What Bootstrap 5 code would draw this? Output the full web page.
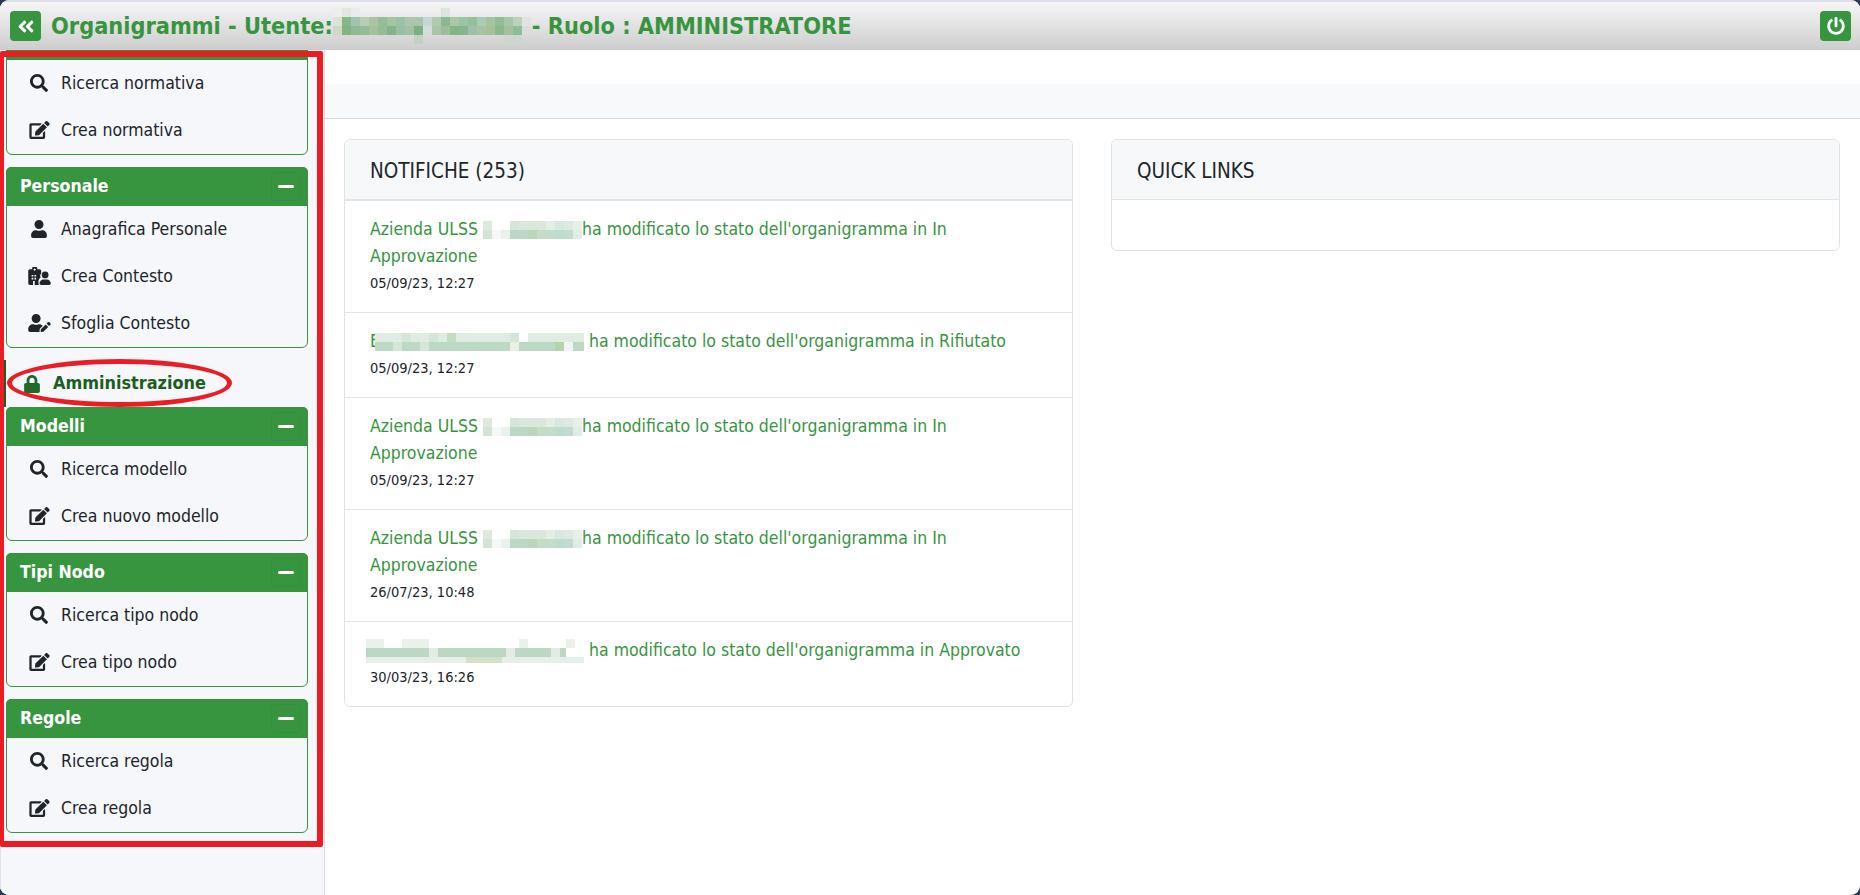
<!DOCTYPE html>
<html lang="it">
<head>
<meta charset="utf-8">
<title>Organigrammi</title>
<link href="https://cdn.jsdelivr.net/npm/bootstrap@5.3.0/dist/css/bootstrap.min.css" rel="stylesheet">
<style>
html,body{height:100%;margin:0;overflow:hidden;background:#2c3a50;}
body{font-family:"DejaVu Sans Condensed","DejaVu Sans",sans-serif;font-stretch:condensed;font-size:17.5px;color:#212529;}
svg.ico{fill:#212529;display:block;margin-top:-1px;}
.app-frame{position:relative;height:895px;border-radius:9px;overflow:hidden;background:#fff;}
.app-head{height:50px;flex:none;background:linear-gradient(#f6f6f6,#cdcdcd);border-top:2px solid #dde0e8;padding:0 9px 0 10px;color:#37953f;}
.head-btn{background:#37953f;border-radius:4px;height:30px;width:31px;border:0;padding:0;display:flex;align-items:center;justify-content:center;}
.head-btn svg{fill:#fff;display:block;}
.head-title{font-size:23.3px;font-weight:700;line-height:30px;white-space:nowrap;margin-left:10px;}
.head-title .blur{margin:0 1px 0 0;}
.side-col{width:325px;flex:none;background:#f5f7fb;border-right:1px solid #d9dce0;border-left:1px solid #dfe2e8;padding:0 16px 0 5px;overflow:hidden;}
.side-box{border:1px solid #37953f;border-radius:6px;margin-bottom:12px;background:#f5f7fb;height:134px;}
.side-box.three{height:181px;}
.side-box.clipped{margin-top:-29px;}
.side-top{background:#37953f;color:#fff;font-weight:700;font-size:17.6px;padding:0 7px 0 14px;border-radius:5px 5px 0 0;margin:-1px -1px 0;height:39px;}
.min-btn{width:30px;height:29px;border:1px solid #35903d;border-radius:5px;display:flex;align-items:center;justify-content:center;}
.min-btn i{display:block;width:16px;height:3px;background:#fff;border-radius:2px;}
.side-row{height:47px;padding-left:18px;color:#212529;text-decoration:none;white-space:nowrap;}
.ico-slot{width:28px;flex:none;display:flex;justify-content:center;margin-right:8px;}
.side-admin{height:47px;margin:0 0 0 -2px;border-left:2px solid #1b5e20;padding-left:18px;color:#1b5e20;font-weight:700;font-size:17.9px;white-space:nowrap;text-decoration:none;}
.side-admin svg{fill:#1f6a2b;display:block;margin-right:13px;}
.main-col{flex:1 1 auto;min-width:0;}
.top-gap{height:34px;background:#fff;}
.sub-bar{height:35px;background:#f8f9fb;border-bottom:1px solid #cddde3;}
.main-cards{padding:20px 20px 0 19px;}
.panel-box{border:1px solid #e0e3e6;border-radius:6px;background:#fff;width:729px;}
.panel-top{background:#f7f8fa;border-bottom:1px solid #e0e3e6;padding:17px 20px 14px 25px;line-height:28px;font-size:20.5px;border-radius:6px 6px 0 0;}
.panel-empty{height:50px;}
.note-row{padding:15px 25px;border-top:1px solid #e3e6e8;line-height:27px;}
.note-row:first-child{border-top:0;}
.note-row a{color:#37953f;text-decoration:none;}
.note-date{font-size:14.5px;color:#212529;}
.blur{display:inline-block;vertical-align:middle;}
.blur-e{margin-left:-10px;}
.blur-f{margin-left:-4px;}
.ring{position:absolute;left:7px;top:359px;width:225px;height:48px;border:5px solid #ec1c24;border-radius:50%;pointer-events:none;}
.frame-mark{position:absolute;left:0;top:51px;width:323px;height:796px;border:6px solid #ec1c24;border-left-width:4px;border-radius:2px;pointer-events:none;}
</style>
</head>
<body>
<svg width="0" height="0" class="position-absolute">
<defs>
<symbol id="i-search" viewBox="0 0 512 512"><path d="M505 442.7L405.3 343c-4.5-4.5-10.6-7-17-7H372c27.6-35.3 44-79.7 44-128C416 93.1 322.9 0 208 0S0 93.1 0 208s93.1 208 208 208c48.3 0 92.7-16.4 128-44v16.3c0 6.4 2.5 12.5 7 17l99.7 99.7c9.4 9.4 24.6 9.4 33.9 0l28.3-28.3c9.4-9.4 9.4-24.6.1-34zM208 336c-70.7 0-128-57.2-128-128 0-70.7 57.2-128 128-128 70.7 0 128 57.2 128 128 0 70.7-57.2 128-128 128z"/></symbol>
<symbol id="i-edit" viewBox="0 0 576 512"><path d="M402.6 83.2l90.2 90.2c3.8 3.8 3.8 10 0 13.8L274.4 405.6l-92.8 10.3c-12.4 1.4-22.9-9.1-21.5-21.5l10.3-92.8L388.8 83.2c3.8-3.8 10-3.8 13.8 0zm162-22.9l-48.8-48.8c-15.2-15.2-39.9-15.2-55.2 0l-35.4 35.4c-3.8 3.8-3.8 10 0 13.8l90.2 90.2c3.8 3.8 10 3.8 13.8 0l35.4-35.4c15.2-15.3 15.2-40 0-55.2zM384 346.2V448H64V128h229.8c3.2 0 6.2-1.3 8.5-3.5l40-40c7.6-7.6 2.2-20.5-8.5-20.5H48C21.5 64 0 85.5 0 112v352c0 26.5 21.5 48 48 48h352c26.5 0 48-21.5 48-48V306.2c0-10.7-12.9-16-20.5-8.5l-40 40c-2.2 2.3-3.5 5.3-3.5 8.5z"/></symbol>
<symbol id="i-user" viewBox="0 0 448 512"><path d="M224 256c70.7 0 128-57.3 128-128S294.7 0 224 0 96 57.3 96 128s57.3 128 128 128zm89.6 32h-16.7c-22.2 10.2-46.9 16-72.9 16s-50.6-5.8-72.9-16h-16.7C60.2 288 0 348.2 0 422.4V464c0 26.5 21.5 48 48 48h352c26.5 0 48-21.5 48-48v-41.6c0-74.2-60.2-134.4-134.4-134.4z"/></symbol>
<symbol id="i-hosp" viewBox="0 0 640 512"><path fill-rule="evenodd" d="M48 64h64V24c0-13 11-24 24-24h96c13 0 24 11 24 24v40h64c26 0 48 22 48 48v70c-30 28-40 80-14 118-40 24-64 70-64 120 0 35 0 60 14 92H48c-26 0-48-22-48-48V112c0-26 22-48 48-48zM172 40v24h-24v24h24v24h24V88h24V64h-24V40zM96 224h48v48H96zm80 0h48v48h-48zm-80 80h48v48H96zm80 0h48v48h-48zM136 400h48v112h-48z"/><circle cx="480" cy="224" r="96"/><path d="M432 352h96c62 0 112 50 112 112 0 27-21 48-48 48H368c-27 0-48-21-48-48 0-62 50-112 112-112z"/></symbol>
<symbol id="i-upen" viewBox="0 0 640 512"><path d="M224 256c70.7 0 128-57.3 128-128S294.7 0 224 0 96 57.3 96 128s57.3 128 128 128zm89.6 32h-16.7c-22.2 10.2-46.9 16-72.9 16s-50.6-5.8-72.9-16h-16.7C60.2 288 0 348.2 0 422.4V464c0 26.5 21.5 48 48 48h274.9c-2.4-6.8-3.4-14-2.6-21.3l6.8-60.9 1.2-11.1 7.9-7.9 77.3-77.3c-24.5-27.7-60-45.5-99.9-45.5zm45.3 145.3l-6.8 61c-1.1 10.2 7.5 18.8 17.6 17.6l60.9-6.8 137.9-137.9-71.7-71.7-137.9 137.8zM633 268.9L595.1 231c-9.3-9.3-24.5-9.3-33.8 0l-37.8 37.8-4.1 4.1 71.8 71.7 41.8-41.8c9.3-9.4 9.3-24.5 0-33.9z"/></symbol>
<symbol id="m-a" viewBox="0 0 99 18" shape-rendering="crispEdges"><path fill="#dcebdc" d="M0 0h9v9H0z"/><path fill="#d4e6d8" d="M27 0h9v9h-9z"/><path fill="#d9e8da" d="M36 0h27v9H36z"/><path fill="#e4eee4" d="M63 0h9v9h-9z"/><path fill="#d8e8e0" d="M72 0h9v9h-9z"/><path fill="#dcebe2" d="M81 0h9v9h-9z"/><path fill="#e6f0ea" d="M90 0h9v9h-9z"/><path fill="#d4e4d4" d="M0 9h9v9H0z"/><path fill="#f4f8f6" d="M9 9h9v9H9z"/><path fill="#e8f2ec" d="M18 9h9v9h-9z"/><path fill="#bcd8c4" d="M27 9h18v9H27z"/><path fill="#bcd6b8" d="M45 9h9v9h-9z"/><path fill="#c6dcc4" d="M54 9h9v9h-9z"/><path fill="#c4dccc" d="M63 9h9v9h-9z"/><path fill="#bcdcd0" d="M72 9h9v9h-9z"/><path fill="#c2ddd0" d="M81 9h9v9h-9z"/><path fill="#e0ece6" d="M90 9h9v9h-9z"/></symbol>
</defs>
</svg>
<div class="app-frame d-flex flex-column">
  <header class="app-head d-flex align-items-center justify-content-between">
    <div class="d-flex align-items-center">
      <button class="head-btn" aria-label="Indietro"><svg width="18" height="19" viewBox="0 0 448 512"><path d="M223.7 239l136-136c9.4-9.4 24.6-9.4 33.9 0l22.6 22.6c9.4 9.4 9.4 24.6 0 33.9L319.9 256l96.4 96.4c9.4 9.4 9.4 24.6 0 33.9L393.7 409c-9.4 9.4-24.6 9.4-33.9 0l-136-136c-9.5-9.4-9.5-24.6-.1-34zm-192 34l136 136c9.4 9.4 24.6 9.4 33.9 0l22.6-22.6c9.4-9.4 9.4-24.6 0-33.9L127.9 256l96.4-96.4c9.4-9.4 9.4-24.6 0-33.9L201.7 103c-9.4-9.4-24.6-9.4-33.9 0l-136 136c-9.5 9.4-9.5 24.6-.1 34z"/></svg></button>
      <div class="head-title d-flex align-items-center"><span>Organigrammi - Utente:</span>
        <svg class="blur" width="198" height="36" viewBox="0 0 198 36" shape-rendering="crispEdges"><path fill="#eee" d="M0 0h9v9H0z"/><path fill="#e2e6e0" d="M9 0h9v9H9z"/><path fill="#e8ecec" d="M18 0h9v9h-9z"/><path fill="#dde3dd" d="M108 0h9v9h-9z"/><path fill="#dce2d8" d="M0 9h9v9H0z"/><path fill="#84b888" d="M9 9h9v9H9z"/><path fill="#9fc4b0" d="M18 9h9v9h-9z"/><path fill="#b6cfb4" d="M27 9h9v9h-9z"/><path fill="#a8c6a0" d="M36 9h9v9h-9z"/><path fill="#94be98" d="M45 9h9v9h-9z"/><path fill="#a2c6a2" d="M54 9h9v9h-9z"/><path fill="#99c2a4" d="M63 9h9v9h-9z"/><path fill="#abc6ac" d="M72 9h18v9H72z"/><path fill="#c4d6d6" d="M90 9h9v9h-9z"/><path fill="#b0ccae" d="M99 9h9v9h-9z"/><path fill="#8aba8e" d="M108 9h9v9h-9z"/><path fill="#a8c8a8" d="M117 9h9v9h-9z"/><path fill="#9cc4a4" d="M126 9h9v9h-9z"/><path fill="#94c09c" d="M135 9h9v9h-9z"/><path fill="#aaccb0" d="M144 9h9v9h-9z"/><path fill="#a4c49a" d="M153 9h9v9h-9z"/><path fill="#92bc96" d="M162 9h9v9h-9z"/><path fill="#a4c8a8" d="M171 9h9v9h-9z"/><path fill="#bcd2bc" d="M180 9h9v9h-9z"/><path fill="#e2e2e0" d="M189 9h9v9h-9z"/><path fill="#ced8c8" d="M0 18h9v9H0z"/><path fill="#80b484" d="M9 18h9v9H9z"/><path fill="#8fb894" d="M18 18h9v9h-9z"/><path fill="#94bc98" d="M27 18h9v9h-9z"/><path fill="#a4c09e" d="M36 18h9v9h-9z"/><path fill="#98ba94" d="M45 18h9v9h-9z"/><path fill="#84b48a" d="M54 18h9v9h-9z"/><path fill="#98bea4" d="M63 18h9v9h-9z"/><path fill="#a4c0a4" d="M72 18h9v9h-9z"/><path fill="#7cb080" d="M81 18h9v9h-9z"/><path fill="#d4dcdc" d="M90 18h9v9h-9z"/><path fill="#aac4a6" d="M99 18h9v9h-9z"/><path fill="#9cbc9a" d="M108 18h9v9h-9z"/><path fill="#84b488" d="M117 18h9v9h-9z"/><path fill="#88b68c" d="M126 18h9v9h-9z"/><path fill="#9cc0a8" d="M135 18h9v9h-9z"/><path fill="#a6c4a4" d="M144 18h9v9h-9z"/><path fill="#a8c098" d="M153 18h9v9h-9z"/><path fill="#8cb890" d="M162 18h9v9h-9z"/><path fill="#a4c09e" d="M171 18h9v9h-9z"/><path fill="#90bc9a" d="M180 18h9v9h-9z"/><path fill="#dcdcda" d="M189 18h9v9h-9z"/><path fill="#c4d0c4" d="M81 27h9v9h-9z"/><path fill="#cfd6cf" d="M171 27h18v9h-18z"/></svg>
        <span>- Ruolo : AMMINISTRATORE</span></div>
    </div>
    <button class="head-btn" aria-label="Esci"><svg width="18" height="18" viewBox="0 0 512 512"><path d="M400 54.1c63 45 104 118.6 104 201.9 0 136.8-110.8 247.7-247.5 248C120 504.3 8.2 393 8 256.4 7.9 173.1 48.9 99.3 111.8 54.2c11.7-8.3 28-4.8 35 7.7L162.6 90c5.9 10.5 3.1 23.8-6.6 31-41.5 30.8-68 79.6-68 134.9-.1 92.3 74.5 168.1 168 168.1 91.6 0 168.6-74.2 168-169.1-.3-51.8-24.7-101.8-68.1-134-9.7-7.2-12.4-20.5-6.5-30.9l15.8-28.1c7-12.4 23.2-16.1 34.8-7.8zM296 264V24c0-13.3-10.7-24-24-24h-32c-13.3 0-24 10.7-24 24v240c0 13.3 10.7 24 24 24h32c13.3 0 24-10.7 24-24z"/></svg></button>
  </header>
  <div class="d-flex flex-grow-1" style="min-height:0">
    <aside class="side-col">
      <div class="side-box clipped">
        <div class="side-top d-flex align-items-center justify-content-between"><span>Normativa</span><span class="min-btn"><i></i></span></div>
        <a class="side-row d-flex align-items-center" href="#"><span class="ico-slot"><svg class="ico" width="18" height="18"><use href="#i-search"/></svg></span>Ricerca normativa</a>
        <a class="side-row d-flex align-items-center" href="#"><span class="ico-slot"><svg class="ico" width="21" height="18"><use href="#i-edit"/></svg></span>Crea normativa</a>
      </div>
      <div class="side-box three">
        <div class="side-top d-flex align-items-center justify-content-between"><span>Personale</span><span class="min-btn"><i></i></span></div>
        <a class="side-row d-flex align-items-center" href="#"><span class="ico-slot"><svg class="ico" width="16" height="18"><use href="#i-user"/></svg></span>Anagrafica Personale</a>
        <a class="side-row d-flex align-items-center" href="#"><span class="ico-slot"><svg class="ico" width="23" height="18"><use href="#i-hosp"/></svg></span>Crea Contesto</a>
        <a class="side-row d-flex align-items-center" href="#"><span class="ico-slot"><svg class="ico" width="23" height="18"><use href="#i-upen"/></svg></span>Sfoglia Contesto</a>
      </div>
      <a class="side-admin d-flex align-items-center" href="#"><svg width="16" height="18" viewBox="0 0 448 512"><path d="M400 224h-24v-72C376 68.2 307.8 0 224 0S72 68.2 72 152v72H48c-26.5 0-48 21.5-48 48v192c0 26.5 21.5 48 48 48h352c26.5 0 48-21.5 48-48V272c0-26.5-21.5-48-48-48zm-104 0H152v-72c0-39.7 32.3-72 72-72s72 32.3 72 72v72z"/></svg>Amministrazione</a>
      <div class="side-box">
        <div class="side-top d-flex align-items-center justify-content-between"><span>Modelli</span><span class="min-btn"><i></i></span></div>
        <a class="side-row d-flex align-items-center" href="#"><span class="ico-slot"><svg class="ico" width="18" height="18"><use href="#i-search"/></svg></span>Ricerca modello</a>
        <a class="side-row d-flex align-items-center" href="#"><span class="ico-slot"><svg class="ico" width="21" height="18"><use href="#i-edit"/></svg></span>Crea nuovo modello</a>
      </div>
      <div class="side-box">
        <div class="side-top d-flex align-items-center justify-content-between"><span>Tipi Nodo</span><span class="min-btn"><i></i></span></div>
        <a class="side-row d-flex align-items-center" href="#"><span class="ico-slot"><svg class="ico" width="18" height="18"><use href="#i-search"/></svg></span>Ricerca tipo nodo</a>
        <a class="side-row d-flex align-items-center" href="#"><span class="ico-slot"><svg class="ico" width="21" height="18"><use href="#i-edit"/></svg></span>Crea tipo nodo</a>
      </div>
      <div class="side-box">
        <div class="side-top d-flex align-items-center justify-content-between"><span>Regole</span><span class="min-btn"><i></i></span></div>
        <a class="side-row d-flex align-items-center" href="#"><span class="ico-slot"><svg class="ico" width="18" height="18"><use href="#i-search"/></svg></span>Ricerca regola</a>
        <a class="side-row d-flex align-items-center" href="#"><span class="ico-slot"><svg class="ico" width="21" height="18"><use href="#i-edit"/></svg></span>Crea regola</a>
      </div>
    </aside>
    <main class="main-col">
      <div class="top-gap"></div>
      <div class="sub-bar"></div>
      <div class="main-cards d-flex align-items-start" style="gap:38px">
        <section class="panel-box">
          <div class="panel-top">NOTIFICHE (253)</div>
          <div class="note-row"><a href="#">Azienda ULSS <svg class="blur" width="99" height="18"><use href="#m-a"/></svg>ha modificato lo stato dell'organigramma in In Approvazione</a><div class="note-date">05/09/23, 12:27</div></div>
          <div class="note-row"><a href="#">E <svg class="blur blur-e" width="209" height="18" viewBox="0 0 209 18" shape-rendering="crispEdges"><path fill="#e0ecE2" d="M0 0h209v9H0z"/><path fill="#d4e6d6" d="M27 0h9v9h-9zM54 0h9v9h-9zM135 0h18v9h-18z"/><path fill="#c6dcc0" d="M72 0h9v9h-9z"/><path fill="#fff" d="M144 0h9v9h-9z"/><path fill="#bcd9c4" d="M0 9h209v9H0z"/><path fill="#d4e6d6" d="M18 9h9v9h-9zM45 9h9v9h-9z"/><path fill="#eaf1e2" d="M135 9h9v9h-9z"/><path fill="#eef5f3" d="M189 9h9v9h-9z"/><path fill="#b4d4ac" d="M180 9h9v9h-9z"/></svg> ha modificato lo stato dell'organigramma in Rifiutato</a><div class="note-date">05/09/23, 12:27</div></div>
          <div class="note-row"><a href="#">Azienda ULSS <svg class="blur" width="99" height="18"><use href="#m-a"/></svg>ha modificato lo stato dell'organigramma in In Approvazione</a><div class="note-date">05/09/23, 12:27</div></div>
          <div class="note-row"><a href="#">Azienda ULSS <svg class="blur" width="99" height="18"><use href="#m-a"/></svg>ha modificato lo stato dell'organigramma in In Approvazione</a><div class="note-date">26/07/23, 10:48</div></div>
          <div class="note-row"><a href="#"><svg class="blur blur-f" width="218" height="24" viewBox="0 0 218 24" shape-rendering="crispEdges"><path fill="#e8f1ea" d="M0 0h18v9H0zM36 0h18v9H36zM54 0h9v9h-9zM153 0h9v9h-9zM200 0h9v9h-9z"/><path fill="#bcd8c4" d="M0 9h200v9H0z"/><path fill="#e2ece4" d="M63 9h9v9h-9zM140 9h9v9h-9zM185 9h9v9h-9z"/><path fill="#e6f0ea" d="M0 18h218v6H0z"/><path fill="#d0e2c8" d="M100 18h36v6h-36z"/></svg> ha modificato lo stato dell'organigramma in Approvato</a><div class="note-date">30/03/23, 16:26</div></div>
        </section>
        <section class="panel-box">
          <div class="panel-top">QUICK LINKS</div>
          <div class="panel-empty"></div>
        </section>
      </div>
    </main>
  </div>
  <div class="frame-mark"></div>
  <div class="ring"></div>
</div>
<script src="https://cdn.jsdelivr.net/npm/bootstrap@5.3.0/dist/js/bootstrap.bundle.min.js"></script>
</body>
</html>
